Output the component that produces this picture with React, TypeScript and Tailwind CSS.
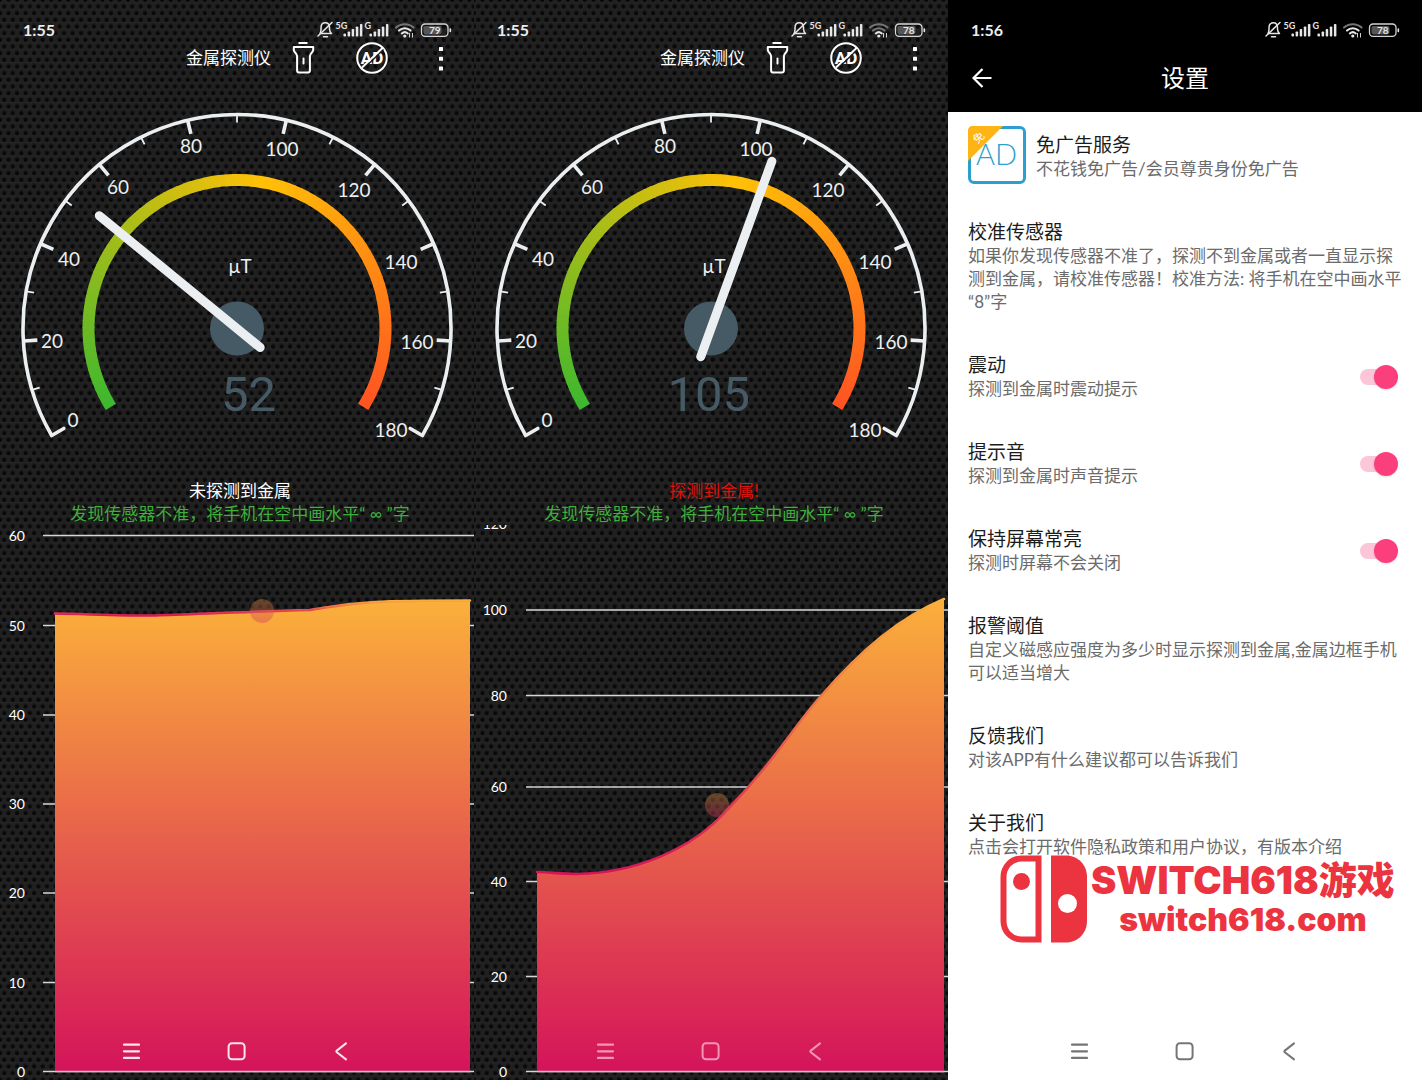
import { useId, useState, type ReactNode } from 'react'

const scaleLabels = [
  { text: '0', x: 73, y: 420 },
  { text: '20', x: 52, y: 341 },
  { text: '40', x: 69, y: 259 },
  { text: '60', x: 118, y: 187 },
  { text: '80', x: 191, y: 146 },
  { text: '100', x: 282, y: 149 },
  { text: '120', x: 354, y: 190 },
  { text: '140', x: 401, y: 262 },
  { text: '160', x: 417, y: 342 },
  { text: '180', x: 391, y: 430 },
]

const CX = 237
const CY = 328.5

// Scale runs 240 degrees clockwise, starting at lower left
function polar(value: number, radius: number) {
  const rad = ((150 + (value * 240) / 180) * Math.PI) / 180
  return { x: CX + radius * Math.cos(rad), y: CY + radius * Math.sin(rad) }
}

function arcPath(from: number, to: number, radius: number) {
  const a = polar(from, radius)
  const b = polar(to, radius)
  const large = to - from > 135 ? 1 : 0
  return `M${a.x} ${a.y}A${radius} ${radius} 0 ${large} 1 ${b.x} ${b.y}`
}

function mix(a: number[], b: number[], t: number) {
  return `rgb(${a.map((c, i) => Math.round(c + (b[i] - c) * t)).join(',')})`
}

function bandColor(value: number) {
  const t = Math.min(Math.max(value / 180, 0), 1)
  const green = [62, 184, 46]
  const amber = [255, 193, 7]
  const red = [255, 84, 34]
  return t < 0.54 ? mix(green, amber, t / 0.54) : mix(amber, red, (t - 0.54) / 0.46)
}

function Mesh() {
  const id = useId()
  return (
    <svg className="absolute inset-0 h-full w-full" aria-hidden="true">
      <defs>
        <pattern id={id} width="8.533" height="13.333" patternUnits="userSpaceOnUse">
          <rect width="8.533" height="13.333" fill="#202020" />
          <g fill="#2c2c2c">
            <circle cx="4.27" cy="7.3" r="2.4" />
            <circle cx="0" cy="0.6" r="2.4" />
            <circle cx="8.533" cy="0.6" r="2.4" />
            <circle cx="0" cy="13.9" r="2.4" />
            <circle cx="8.533" cy="13.9" r="2.4" />
          </g>
          <g fill="#090909">
            <circle cx="4.27" cy="6.67" r="2.3" />
            <circle cx="0" cy="0" r="2.3" />
            <circle cx="8.533" cy="0" r="2.3" />
            <circle cx="0" cy="13.333" r="2.3" />
            <circle cx="8.533" cy="13.333" r="2.3" />
          </g>
        </pattern>
      </defs>
      <rect width="100%" height="100%" fill={`url(#${id})`} />
    </svg>
  )
}

function SignalBars({ x }: { x: number }) {
  return (
    <g>
      {[3, 5, 7.5, 10, 12.5].map((h, i) => (
        <rect key={i} x={x + i * 4.1} y={16.5 - h} width="2.5" height={h} rx="0.8" />
      ))}
    </g>
  )
}

function StatusBar({ time, battery, weakWifi }: { time: string; battery: number; weakWifi?: boolean }) {
  return (
    <div className="flex h-11 items-center justify-between pt-4 pr-[21px] pl-[23px] text-[#ececec]">
      <span className="text-base leading-7 font-bold">{time}</span>
      <svg className="h-5 w-[136px]" viewBox="0 0 136 20" fill="#e6e6e6" role="img" aria-label={`电量 ${battery}%`}>
        {/* Muted bell */}
        <g fill="none" stroke="#e6e6e6" strokeWidth="1.5" strokeLinecap="round" strokeLinejoin="round">
          <path d="M3 13.5h11.5c-1.6-1.4-2-2.8-2-4.6V8c0-3-1.6-5.2-4.2-5.2S4 5 4 8v1.2c0 1.7-.3 3-1 4.3z" />
          <path d="M1 16 15 2.500M6.500 16.800h4" />
        </g>
        <text x="18.500" y="9" fontSize="9" fontWeight="700">5G</text>
        <SignalBars x={26.5} />
        <text x="47.500" y="9" fontSize="9" fontWeight="700">G</text>
        <SignalBars x={52.5} />
        {/* Wifi */}
        <g fill="none" strokeWidth="2" strokeLinecap="round">
          <path d="M79 7.600a13 13 0 0 1 17.600 0" stroke="#757575" />
          <path d="M82 10.600a8.600 8.600 0 0 1 11.600 0" stroke={weakWifi ? '#757575' : '#e6e6e6'} />
          <path d="M84.800 13.400a4.600 4.600 0 0 1 6 0" stroke="#e6e6e6" />
        </g>
        <circle cx="87.8" cy="16" r="1.6" />
        <path d="M92.500 13v4.500M95.500 17.500V13" stroke="#cfcfcf" strokeWidth="1" />
        {/* Battery */}
        <rect x="104.5" y="4" width="26.500" height="12.400" rx="3.600" fill="none" stroke="#d5d5d5" strokeWidth="1.300" />
        <rect x="106.5" y="6" width="18" height="8.400" rx="1.800" fill="#555" />
        <rect x="132.5" y="8.200" width="1.600" height="4" rx="0.800" />
        <text x="117.800" y="13.900" fontSize="10" fontWeight="700" textAnchor="middle">{battery}</text>
      </svg>
    </div>
  )
}

function NavBar({ tone }: { tone: string }) {
  return (
    <nav className={`absolute inset-x-0 bottom-0 flex h-[58px] items-center justify-center gap-[65px] ${tone}`}>
      <button className="flex size-10 items-center justify-center" aria-label="最近任务">
        <svg className="size-5" viewBox="0 0 20 20" stroke="currentColor" strokeWidth="2.2" strokeLinecap="round">
          <path d="M2 3.700h15M2 10.300h15M2 16.900h15" />
        </svg>
      </button>
      <button className="flex size-10 items-center justify-center" aria-label="主屏幕">
        <svg className="size-5" viewBox="0 0 20 20" fill="none" stroke="currentColor" strokeWidth="2">
          <rect x="1.600" y="2.300" width="16" height="16" rx="3.400" />
        </svg>
      </button>
      <button className="flex size-10 items-center justify-center" aria-label="返回">
        <svg className="size-5" viewBox="0 0 20 20" fill="none" stroke="currentColor" strokeWidth="2" strokeLinecap="round" strokeLinejoin="round">
          <path d="M14 2.400 4.800 9.600q-.9.800 0 1.600L14 18.400" />
        </svg>
      </button>
    </nav>
  )
}

function Toolbar() {
  return (
    <div className="flex h-7 items-center justify-end gap-4 pr-[17px]">
      <h1 className="text-[17px] leading-7 text-white">金属探测仪</h1>
      <div className="flex items-center gap-[37px]">
        <button className="size-8" aria-label="手电筒">
          <svg className="size-8" viewBox="0 0 32 32" fill="none" stroke="#fff" strokeWidth="2" strokeLinejoin="round">
            <path d="M11.5 1h9" />
            <path d="M6.8 5h19.4v3c-.3 2.6-3.300 3.500-3.300 6.300v14.200c0 1.400-.7 2-2 2h-8.800c-1.300 0-2-.6-2-2V14.300c0-2.800-3-3.700-3.300-6.300z" />
            <path d="M16.5 16.5v5" strokeLinecap="round" />
          </svg>
        </button>
        <button className="size-8" aria-label="去广告">
          <svg className="size-8" viewBox="0 0 32 32">
            <circle cx="16" cy="16" r="14.800" fill="none" stroke="#fff" strokeWidth="2" />
            <text x="16" y="22" textAnchor="middle" fill="#fff" fontFamily="Roboto" fontSize="17" fontWeight="700">AD</text>
            <path d="M7.800 26.600 27.500 7.500" stroke="#1b1b1b" strokeWidth="1.400" />
            <path d="M6 25.500 26.500 6" stroke="#fff" strokeWidth="1.800" />
          </svg>
        </button>
        <button className="size-8" aria-label="更多">
          <svg className="size-8" viewBox="0 0 32 32" fill="#fff">
            <rect x="14" y="5" width="4" height="4" rx="0.500" />
            <rect x="14" y="14.800" width="4" height="4" rx="0.500" />
            <rect x="14" y="24.600" width="4" height="4" rx="0.500" />
          </svg>
        </button>
      </div>
    </div>
  )
}

function Gauge({ value }: { value: number }) {
  const tip = polar(value, 178)
  const tail = polar(value, -30)
  const ticks = Array.from({ length: 19 }, (_, i) => i * 10)
  const bands = Array.from({ length: 92 }, (_, i) => i * 2 - 1.4)

  return (
    <svg className="block w-full" viewBox="0 72 474 407" role="img" aria-label={`${value} µT`}>
      <path d={arcPath(0, 180, 214)} fill="none" stroke="#eceff1" strokeWidth="3.6" />
      {ticks.map((tick) => {
        const major = tick % 20 === 0
        const a = polar(tick, 214)
        const b = polar(tick, major ? 200 : 206)
        return (
          <line
            key={tick}
            x1={a.x}
            y1={a.y}
            x2={b.x}
            y2={b.y}
            stroke="#eceff1"
            strokeWidth={major ? 3.6 : 1.8}
            strokeLinecap={tick % 180 === 0 ? 'round' : 'butt'}
          />
        )
      })}
      {bands.map((start) => (
        <path
          key={start}
          d={arcPath(start, Math.min(start + 2.3, 181.4), 148.5)}
          fill="none"
          stroke={bandColor(start + 1)}
          strokeWidth="12"
        />
      ))}
      <g fill="#eceff1" fontSize="19" textAnchor="middle">
        {scaleLabels.map((label) => (
          <text key={label.text} x={label.x} y={label.y + 7}>{label.text}</text>
        ))}
        <text x="240" y="273">µT</text>
      </g>
      <circle cx={CX} cy={CY} r="27" fill="#455a64" />
      <text x="276" y="411" textAnchor="end" fill="#455a64" fontSize="49" fontFamily="Roboto, sans-serif">
        {value}
      </text>
      <line x1={tail.x} y1={tail.y} x2={tip.x} y2={tip.y} stroke="#eceff1" strokeWidth="9" strokeLinecap="round" />
    </svg>
  )
}

interface ChartProps {
  lines: { label: string; y: number }[]
  labelX: number
  lineX: number
  curve: string
  left: number
  right: number
  top: number
  low: number
  marker: { x: number; y: number }
}

function Chart({ lines, labelX, lineX, curve, left, right, top, low, marker }: ChartProps) {
  const id = useId()
  return (
    <svg className="block w-full" viewBox="0 525 474 555" role="img" aria-label="磁感应强度曲线">
      <defs>
        <linearGradient id={`${id}fill`} gradientUnits="userSpaceOnUse" x1="0" y1={top} x2="0" y2="1071">
          <stop offset="0" stopColor="#fbb03b" />
          <stop offset="1" stopColor="#d4145a" />
        </linearGradient>
        <linearGradient id={`${id}line`} gradientUnits="userSpaceOnUse" x1="0" y1={top} x2="0" y2={low}>
          <stop offset="0" stopColor="#fbb03b" />
          <stop offset="1" stopColor="#d4145a" />
        </linearGradient>
        <linearGradient id={`${id}dot`} x1="0" y1="0" x2="0" y2="1">
          <stop offset="0" stopColor="#c98a3a" />
          <stop offset="1" stopColor="#d8325a" />
        </linearGradient>
      </defs>
      {lines.map((line) => (
        <g key={line.label}>
          <text x={labelX} y={line.y + 5} textAnchor="end" fill="#fff" fontSize="14">{line.label}</text>
          <path d={`M${lineX} ${line.y}H474`} stroke="#d6d6d6" strokeWidth="1.4" />
        </g>
      ))}
      <path d={`${curve}V1071H${left}Z`} fill={`url(#${id}fill)`} />
      <path d={curve} fill="none" stroke={`url(#${id}line)`} strokeWidth="2.6" strokeLinecap="round" />
      <path d={`M${left} 1071.500H${right}`} stroke="#e9b3c6" strokeWidth="1.500" />
      <circle cx={marker.x} cy={marker.y} r="12" fill={`url(#${id}dot)`} opacity="0.4" />
    </svg>
  )
}

interface DetectorProps {
  value: number
  battery: number
  weakWifi?: boolean
  message: string
  messageTone: string
  navTone: string
  children: ReactNode
}

function Detector({ value, battery, weakWifi, message, messageTone, navTone, children }: DetectorProps) {
  return (
    <section className="relative overflow-hidden bg-[#202020]">
      <Mesh />
      <div className="relative">
        <StatusBar time="1:55" battery={battery} weakWifi={weakWifi} />
        <Toolbar />
        <Gauge value={value} />
        <div className="pl-1.5 text-center text-[17px] leading-[23px]">
          <p className={messageTone}>{message}</p>
          <p className="text-[#3fae3a]">发现传感器不准，将手机在空中画水平“ ∞ ”字</p>
        </div>
        {children}
        <NavBar tone={navTone} />
      </div>
    </section>
  )
}

function SettingItem({ title, summary, icon }: { title: string; summary: string; icon?: ReactNode }) {
  return (
    <li>
      <button className="flex w-full items-center gap-2.5 px-5 py-5 text-left">
        {icon}
        <span className="block">
          <span className="block text-[19px] leading-6 text-[#1c1c1c]">{title}</span>
          <span className="block text-[17px] leading-[23px] text-[#6b6b6b]">{summary}</span>
        </span>
      </button>
    </li>
  )
}

function SettingSwitch({ title, summary }: { title: string; summary: string }) {
  const [on, setOn] = useState(true)
  return (
    <li>
      <label className="flex items-center justify-between px-5 py-5">
        <span>
          <span className="block text-[19px] leading-6 text-[#1c1c1c]">{title}</span>
          <span className="block text-[17px] leading-[23px] text-[#6b6b6b]">{summary}</span>
        </span>
        <input
          type="checkbox"
          role="switch"
          checked={on}
          onChange={(e) => setOn(e.target.checked)}
          className="relative mr-1 h-6 w-[38px] appearance-none before:absolute before:top-1 before:left-0 before:h-4 before:w-8 before:rounded-full before:bg-[#c4c4c4] after:absolute after:top-0 after:left-0 after:size-6 after:rounded-full after:bg-[#f5f5f5] after:shadow-sm checked:before:bg-[#fcc5d8] checked:after:right-0 checked:after:left-auto checked:after:bg-[#fb3f7c]"
        />
      </label>
    </li>
  )
}

function AdFreeIcon() {
  return (
    <svg className="-mt-2 -mb-1 size-[58px] shrink-0" viewBox="0 0 58 58" aria-hidden="true">
      <rect x="1.5" y="1.5" width="55" height="55" rx="4.5" fill="#fff" stroke="#2b9fd0" strokeWidth="3" />
      <path d="M5 0h30L0 35V5q0-5 5-5z" fill="#fdb414" />
      <text x="28.500" y="39" textAnchor="middle" fill="#2b9fd0" fontSize="29" fontWeight="300">AD</text>
      <text x="11" y="15.500" textAnchor="middle" fill="#fff" fontSize="11" transform="rotate(-45 11 12)">免</text>
    </svg>
  )
}

function Watermark() {
  return (
    <div className="pointer-events-none absolute top-[855px] left-[52px] flex gap-1 text-[#eb3440]">
      <svg className="h-[88px] w-[87px] shrink-0" viewBox="0 0 87 88" aria-hidden="true">
        <path d="M38.5 3.5V84.500H22C11 84.500 3.500 76 3.500 66V22C3.500 12 11 3.500 22 3.500z" fill="#fff" stroke="currentColor" strokeWidth="6" />
        <circle cx="21.5" cy="26.5" r="8.5" fill="currentColor" />
        <path d="M51 .5H66C78 .5 87 10 87 22V66C87 78 78 87.500 66 87.500H51z" fill="currentColor" />
        <circle cx="67.5" cy="48.5" r="9.5" fill="#fff" />
      </svg>
      <div className="flex flex-col items-center pt-1 font-['Inter','Noto_Sans_CJK_SC',sans-serif] font-black whitespace-nowrap">
        <span className="text-[38px] leading-[42px]">SWITCH618游戏</span>
        <span className="text-[32px] leading-[38px]">switch618.com</span>
      </div>
    </div>
  )
}

function Settings() {
  return (
    <section className="relative bg-white">
      <header className="bg-black text-white">
        <StatusBar time="1:56" battery={78} />
        <div className="flex h-[68px] items-center justify-between px-5">
          <button className="flex size-7 items-center" aria-label="返回">
            <svg className="size-7" viewBox="0 0 28 28" fill="none" stroke="#fff" strokeWidth="2.2">
              <path d="M23.5 14H6M14.500 5 5.500 14l9 9" />
            </svg>
          </button>
          <h1 className="text-2xl">设置</h1>
          <span className="w-7" />
        </div>
      </header>
      <ul className="pt-px pb-[58px]">
        <SettingItem title="免广告服务" summary="不花钱免广告/会员尊贵身份免广告" icon={<AdFreeIcon />} />
        <SettingItem
          title="校准传感器"
          summary="如果你发现传感器不准了，探测不到金属或者一直显示探测到金属，请校准传感器！校准方法: 将手机在空中画水平“8”字"
        />
        <SettingSwitch title="震动" summary="探测到金属时震动提示" />
        <SettingSwitch title="提示音" summary="探测到金属时声音提示" />
        <SettingSwitch title="保持屏幕常亮" summary="探测时屏幕不会关闭" />
        <SettingItem title="报警阈值" summary="自定义磁感应强度为多少时显示探测到金属,金属边框手机可以适当增大" />
        <SettingItem title="反馈我们" summary="对该APP有什么建议都可以告诉我们" />
        <SettingItem title="关于我们" summary="点击会打开软件隐私政策和用户协议，有版本介绍" />
      </ul>
      <Watermark />
      <NavBar tone="text-[#757575]" />
    </section>
  )
}

export default function App() {
  return (
    <main lang="zh-CN" className="grid min-h-screen grid-cols-3 font-['Lato','Noto_Sans_CJK_SC',sans-serif]">
      <Detector value={52} battery={79} message="未探测到金属" messageTone="text-white" navTone="text-[#fde3ee]">
        <Chart
          lines={[
            { label: '60', y: 535.5 },
            { label: '50', y: 625.5 },
            { label: '40', y: 715 },
            { label: '30', y: 804 },
            { label: '20', y: 893 },
            { label: '10', y: 982.5 },
            { label: '0', y: 1071.5 },
          ]}
          labelX={25}
          lineX={43}
          curve="M55 613.5C85 614 130 616 155 615.5C200 614 250 611.5 310 610C330 607 340 604 375 602C400 600.5 440 600.5 470 600.5"
          left={55}
          right={470}
          top={600}
          low={616}
          marker={{ x: 262, y: 611 }}
        />
      </Detector>
      <Detector value={105} battery={78} weakWifi message="探测到金属!" messageTone="text-[#d8140c]" navTone="text-[#f593b8]">
        <Chart
          lines={[
            { label: '120', y: 523.5 },
            { label: '100', y: 610 },
            { label: '80', y: 695.5 },
            { label: '60', y: 787 },
            { label: '40', y: 881.5 },
            { label: '20', y: 976.5 },
            { label: '0', y: 1071.5 },
          ]}
          labelX={33}
          lineX={52}
          curve="M63 872C75 872 86 874 103 874C160 873 218 850 253 810C300 762 320 726 347 696C388 649 425 618 470 599"
          left={63}
          right={470}
          top={598}
          low={874}
          marker={{ x: 243, y: 805 }}
        />
      </Detector>
      <Settings />
    </main>
  )
}
